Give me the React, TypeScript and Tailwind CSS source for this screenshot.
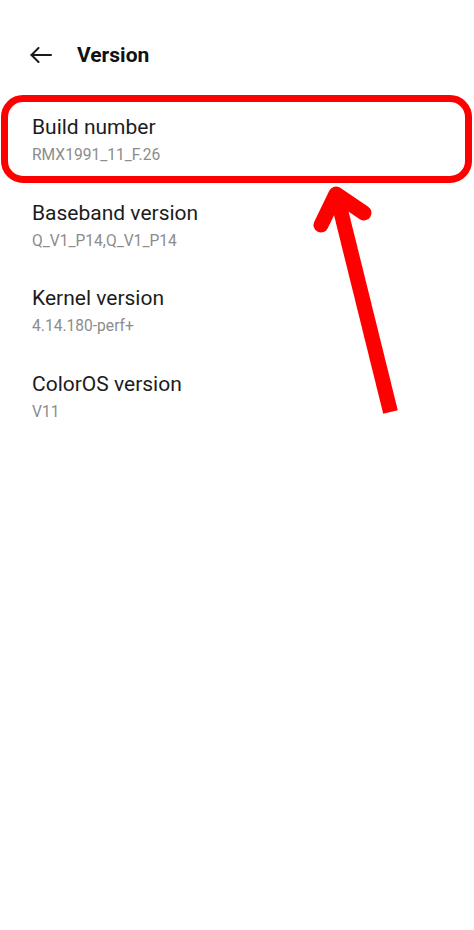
import React from "react";

const rows = [
  { title: "Build number", value: "RMX1991_11_F.26" },
  { title: "Baseband version", value: "Q_V1_P14,Q_V1_P14" },
  { title: "Kernel version", value: "4.14.180-perf+" },
  { title: "ColorOS version", value: "V11" },
];

function BackArrow() {
  return (
    <svg width="22" height="16" viewBox="0 0 22 16" fill="none" stroke="#1a1a1a" strokeWidth="2" strokeLinecap="round" strokeLinejoin="round">
      <path d="M21 8H1.5" />
      <path d="M8.5 1L1.5 8l7 7" />
    </svg>
  );
}

export default function App() {
  return (
    <div className="relative w-[474px] h-[930px] bg-white overflow-hidden" style={{ fontFamily: "Roboto, 'Noto Sans', sans-serif" }}>
      <div className="pt-[27px]">
        <div className="h-[56px] flex items-center pl-[30px] gap-[25px]">
          <BackArrow />
          <h1 className="text-[21px] leading-[28px] font-bold text-[#111]">Version</h1>
        </div>

        <div className="mt-[13px] flex flex-col">
          {rows.map((r, i) => (
            <div key={r.title} className="relative h-[85.5px] pt-[17px] pl-8">
              <div className="text-[21px] leading-[28px] text-[#1c1c1c]">{r.title}</div>
              <div className="mt-1 text-[15.6px] leading-[20px] text-[#8c8c8c]">{r.value}</div>
              {i === 0 && (
                <div className="absolute -top-[1px] -bottom-[1px] left-[1px] right-[2px] border-[7px] border-[#ff0000] rounded-[22px] pointer-events-none" />
              )}
            </div>
          ))}
        </div>
      </div>

      {/* annotation arrow */}
      <svg className="absolute inset-0 pointer-events-none" width="474" height="930" viewBox="0 0 474 930" fill="none" stroke="#ff0000" strokeWidth="15">
        <path d="M390.5 412L337 196" />
        <path d="M321 225L336 194L364 213" strokeLinecap="round" strokeLinejoin="round" />
      </svg>
    </div>
  );
}
